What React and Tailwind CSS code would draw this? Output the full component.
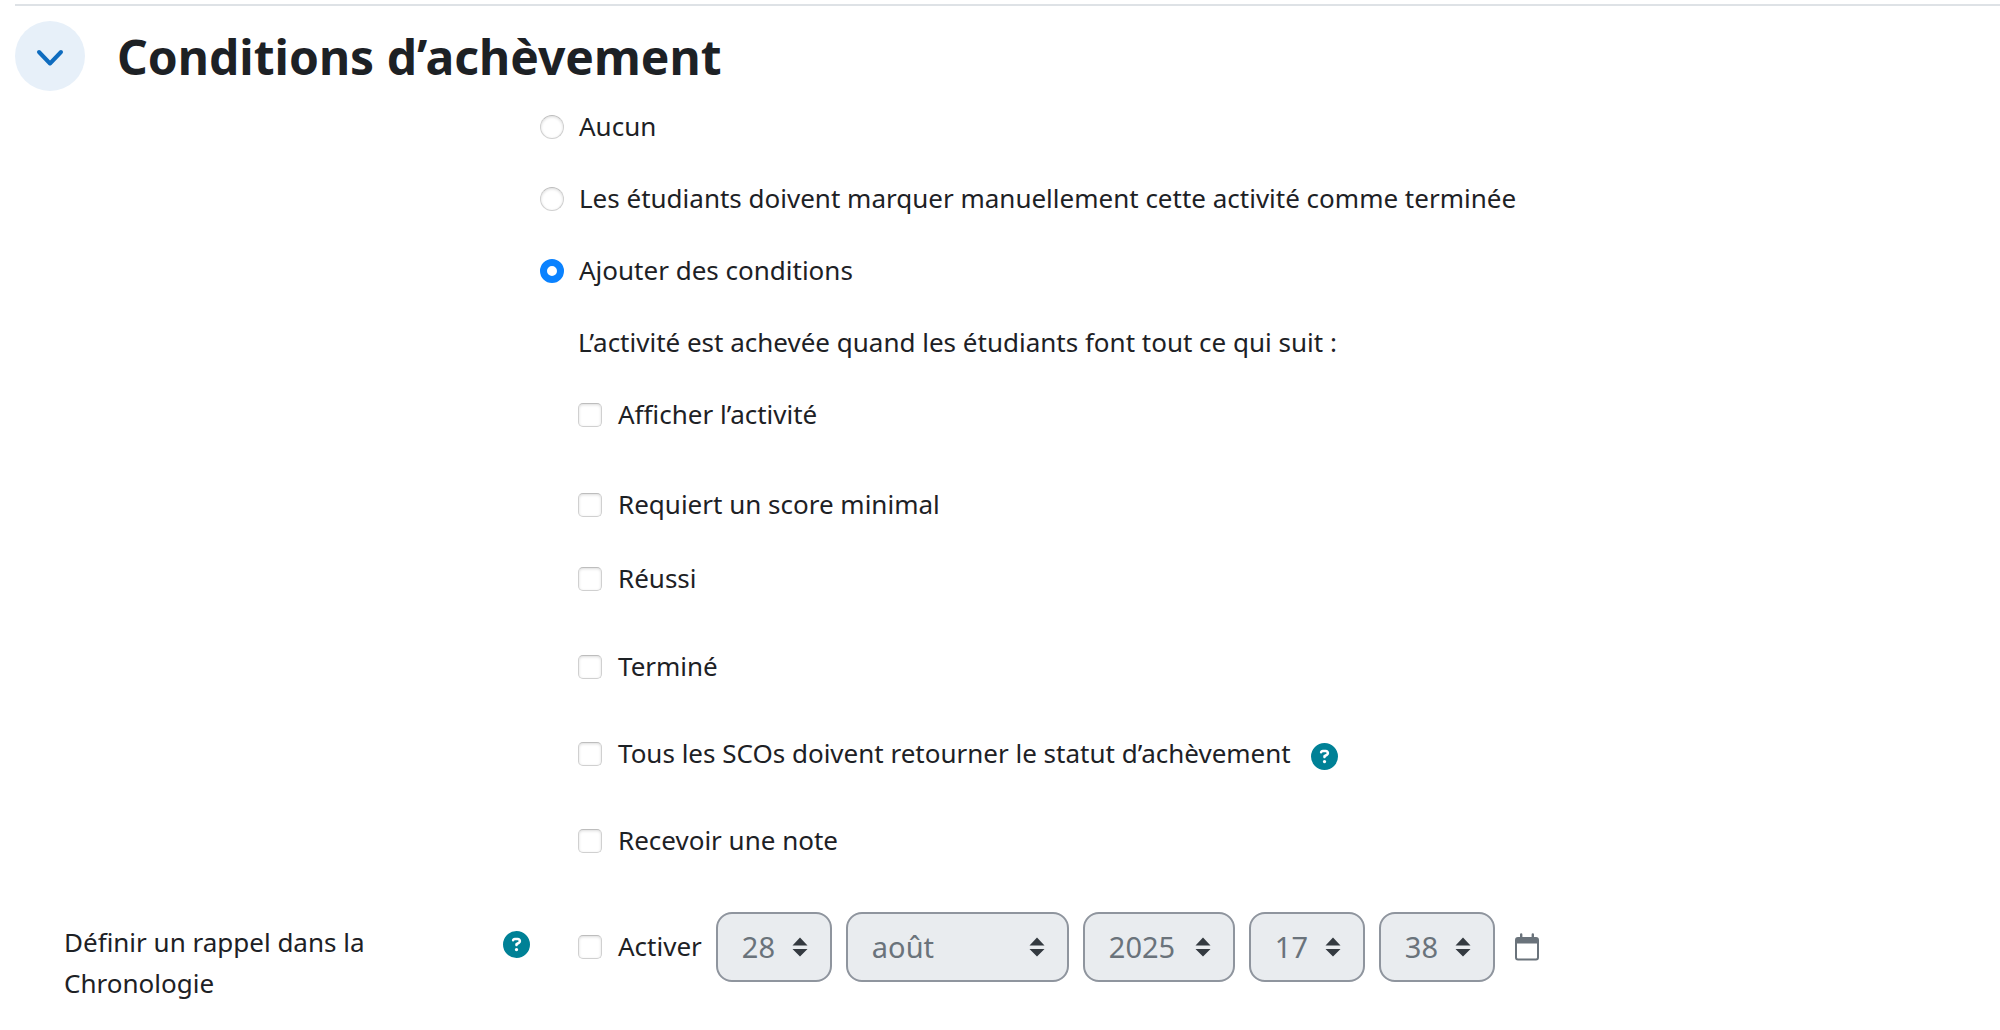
import React, { useState } from "react";
import { FaCircleQuestion } from "react-icons/fa6";

const MODES = [
  { value: "none", label: "Aucun" },
  {
    value: "manual",
    label: "Les étudiants doivent marquer manuellement cette activité comme terminée",
  },
  { value: "auto", label: "Ajouter des conditions" },
];

const CONDITIONS = [
  { id: "view", label: "Afficher l’activité", spacing: "mb-12" },
  { id: "minscore", label: "Requiert un score minimal", spacing: "mb-8" },
  { id: "passed", label: "Réussi", spacing: "mb-[46px]" },
  { id: "completed", label: "Terminé", spacing: "mb-[45px]" },
  {
    id: "allscos",
    label: "Tous les SCOs doivent retourner le statut d’achèvement",
    spacing: "mb-[45px]",
    help: true,
  },
  { id: "grade", label: "Recevoir une note", spacing: "mb-[50px]" },
];

const DATE_FIELDS = [
  { id: "day", label: "Jour", value: "28", width: "w-29" },
  { id: "month", label: "Mois", value: "août", width: "w-[223px]" },
  { id: "year", label: "Année", value: "2025", width: "w-[152px]" },
  { id: "hour", label: "Heure", value: "17", width: "w-29" },
  { id: "minute", label: "Minute", value: "38", width: "w-29" },
];

const HelpButton = ({ label }) => (
  <button type="button" aria-label={label} className="shrink-0 text-[#008196]">
    <FaCircleQuestion size={27} />
  </button>
);

const Checkbox = ({ id, checked, onChange }) => (
  <input
    type="checkbox"
    id={id}
    checked={checked}
    onChange={onChange}
    className="size-6 shrink-0 appearance-none rounded-[5px] border border-[#d0d0d0] border-t-[#bdbdbd] bg-white shadow-[inset_0_1px_3px_rgba(0,0,0,0.14)] checked:border-[#007aff] checked:bg-[#007aff]"
  />
);

const DateSelect = ({ field, disabled }) => (
  <div className={`relative ${field.width}`}>
    <select
      aria-label={field.label}
      defaultValue={field.value}
      disabled={disabled}
      className="h-[70px] w-full appearance-none rounded-2xl border-2 border-[#8f959e] bg-[#e9ecef] pb-0.5 pl-6 text-[29px] text-[#6a737b] opacity-100"
    >
      <option>{field.value}</option>
    </select>
    <svg
      viewBox="0 0 16 20"
      className="pointer-events-none absolute top-[25px] right-6 h-5 w-4 fill-[#343a40]"
    >
      <path d="M8 .5 15.5 8.500H.5zM8 19.500.5 12h15z" />
    </svg>
  </div>
);

const App = () => {
  const [mode, setMode] = useState("auto");
  const [checked, setChecked] = useState({});
  const [open, setOpen] = useState(true);

  const toggle = (id) => {
    setChecked((prev) => ({ ...prev, [id]: !prev[id] }));
  };

  return (
    <div className="min-h-screen bg-white pt-1 font-['Noto_Sans',sans-serif] text-[26px] leading-[41px] text-[#1d2125]">
      <div className="ml-[15px] border-t-2 border-[#dee2e6]" />

      <div className="mt-[15px] mb-[15px] ml-[15px] flex items-center gap-8">
        <button
          type="button"
          aria-label="Conditions d’achèvement"
          aria-expanded={open}
          onClick={() => setOpen(!open)}
          className="flex size-[70px] items-center justify-center rounded-full bg-[#e7f0f9]"
        >
          <svg
            viewBox="0 0 28 18"
            className="mt-1 h-[18px] w-7 fill-none stroke-[#0f6cbf] stroke-[4]"
            strokeLinecap="round"
            strokeLinejoin="round"
          >
            <path d="M3 3 14 14.500 25 3" />
          </svg>
        </button>
        <h3 className="pt-0.5 text-5xl leading-[60px] font-bold">Conditions d’achèvement</h3>
      </div>

      {open && (
        <form>
          <div className="ml-[27%]">
            {MODES.map((item) => (
              <label key={item.value} className="mb-[30px] flex h-[42px] items-center gap-[15px]">
                <input
                  type="radio"
                  name="completion"
                  value={item.value}
                  checked={mode === item.value}
                  onChange={() => setMode(item.value)}
                  className="size-6 shrink-0 appearance-none rounded-full border border-[#d0d0d0] border-t-[#bdbdbd] bg-white shadow-[inset_0_1px_3px_rgba(0,0,0,0.14)] checked:border-[7px] checked:border-[#0a82ff] checked:shadow-none"
                />
                <span className="pb-0.5">{item.label}</span>
              </label>
            ))}

            <div className="ml-[38px]">
              <p className="mb-[30px] h-[42px]">
                L’activité est achevée quand les étudiants font tout ce qui suit :
              </p>
              {CONDITIONS.map((item) => (
                <div key={item.id} className={`flex h-[42px] items-center gap-4 ${item.spacing}`}>
                  <Checkbox
                    id={item.id}
                    checked={!!checked[item.id]}
                    onChange={() => toggle(item.id)}
                  />
                  <label htmlFor={item.id} className="pb-0.5">
                    {item.label}
                  </label>
                  {item.help && (
                    <div className="flex pt-1 pl-1">
                      <HelpButton label="Aide sur le statut d’achèvement" />
                    </div>
                  )}
                </div>
              ))}
            </div>
          </div>

          <div className="flex items-start">
            <div className="flex w-[27%] items-start justify-between pt-[10px] pr-[10px] pl-16">
              <p className="max-w-80">Définir un rappel dans la Chronologie</p>
              <div className="pt-[6px]">
                <HelpButton label="Aide sur le rappel" />
              </div>
            </div>
            <div className="ml-[38px] flex items-center gap-[14px]">
              <div className="flex items-center gap-4">
                <Checkbox
                  id="enabled"
                  checked={!!checked.enabled}
                  onChange={() => toggle("enabled")}
                />
                <label htmlFor="enabled" className="pb-0.5">
                  Activer
                </label>
              </div>
              {DATE_FIELDS.map((field) => (
                <DateSelect key={field.id} field={field} disabled={!checked.enabled} />
              ))}
              <button type="button" aria-label="Calendrier" className="ml-[5px]">
                <svg viewBox="0 0 26 28" className="h-7 w-[26px] fill-[#6a737b]">
                  <path
                    fillRule="evenodd"
                    d="M6 1.500a1.200 1.200 0 0 1 2.400 0V4h9.200V1.500a1.200 1.200 0 0 1 2.400 0V4h2a3 3 0 0 1 3 3v17.500a3 3 0 0 1-3 3H4a3 3 0 0 1-3-3V7a3 3 0 0 1 3-3h2zM3 10.500v14a1 1 0 0 0 1 1h18a1 1 0 0 0 1-1v-14z"
                  />
                </svg>
              </button>
            </div>
          </div>
        </form>
      )}
    </div>
  );
};

export default App;
